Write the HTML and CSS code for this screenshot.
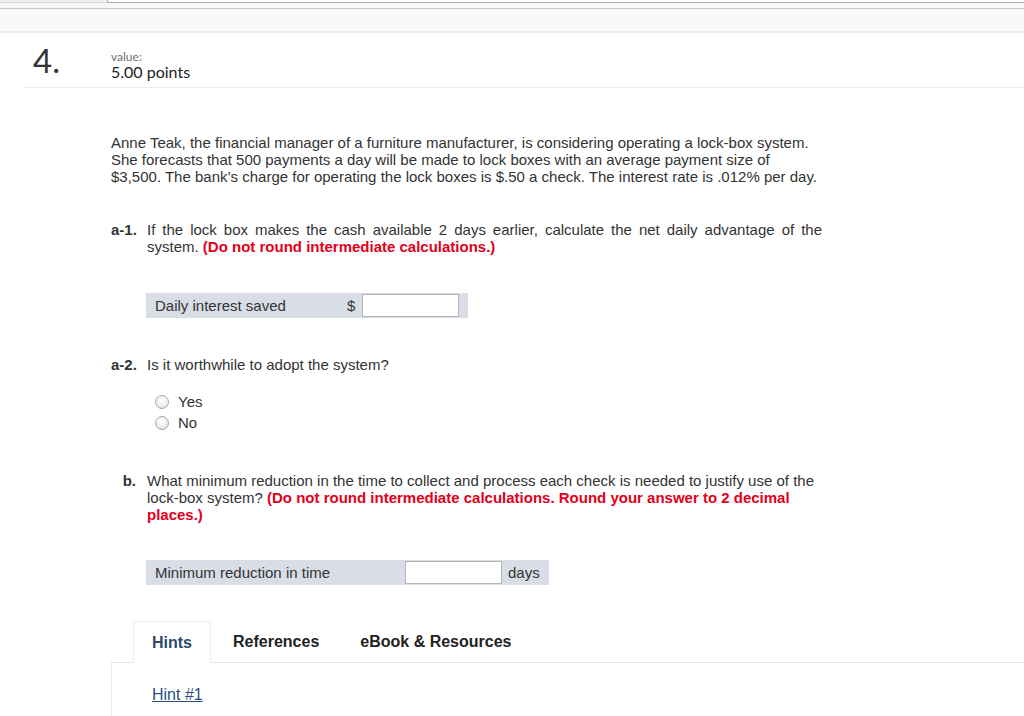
FILE: index.html
```html
<!DOCTYPE html>
<html>
<head>
<meta charset="utf-8">
<link rel="stylesheet" href="styles.css">
</head>
<body>
<div class="chrome">
  <div class="chrome-top"><div class="chrome-left"></div><div class="chrome-field"></div></div>
  <div class="chrome-gap"></div>
  <div class="chrome-band"></div>
</div>

<div class="qhead">
  <div class="qnum">4.</div>
  <div class="qval">
    <div class="vlabel">value:</div>
    <div class="vpoints">5.00 points</div>
  </div>
</div>

<div class="qbody">
  <p class="intro">Anne Teak, the financial manager of a furniture manufacturer, is considering operating a lock-box system. She forecasts that 500 payments a day will be made to lock boxes with an average payment size of $3,500. The bank’s charge for operating the lock boxes is $.50 a check. The interest rate is .012% per day.</p>

  <div class="part part-a1">
    <div class="plabel">a-1.</div>
    <div class="ptext justify">If the lock box makes the cash available 2 days earlier, calculate the net daily advantage of the system. <span class="red">(Do not round intermediate calculations.)</span></div>
  </div>

  <div class="answer answer-1">
    <span class="alabel w1">Daily interest saved</span>
    <span class="dollar">$</span>
    <span class="field"></span>
  </div>

  <div class="part part-a2">
    <div class="plabel">a-2.</div>
    <div class="ptext">Is it worthwhile to adopt the system?</div>
  </div>

  <div class="radios">
    <div class="radio"><span class="circle"></span><span class="rlabel">Yes</span></div>
    <div class="radio"><span class="circle"></span><span class="rlabel">No</span></div>
  </div>

  <div class="part part-b">
    <div class="plabel">b.</div>
    <div class="ptext">What minimum reduction in the time to collect and process each check is needed to justify use of the lock-box system? <span class="red">(Do not round intermediate calculations. Round your answer to 2 decimal places.)</span></div>
  </div>

  <div class="answer answer-2">
    <span class="alabel w2">Minimum reduction in time</span>
    <span class="field"></span>
    <span class="unit">days</span>
  </div>
</div>

<div class="tabs">
  <div class="tab active">Hints</div>
  <div class="tab">References</div>
  <div class="tab">eBook &amp; Resources</div>
</div>
<div class="tabpanel">
  <a class="hint" href="#">Hint #1</a>
</div>
</body>
</html>
```

FILE: styles.css
```css
html, body {
  margin: 0;
  padding: 0;
  background: #ffffff;
}
body {
  width: 1024px;
  height: 716px;
  overflow: hidden;
  font-family: "Liberation Sans", Arial, sans-serif;
  color: #333333;
}

/* browser chrome strip */
.chrome-top {
  display: flex;
  height: 3px;
  background: #f1f1f1;
}
.chrome-left {
  width: 107px;
  border-bottom: 1px solid #d6d6d6;
  box-sizing: border-box;
}
.chrome-field {
  flex: 1;
  background: #ffffff;
  border-left: 1px solid #b8b8b8;
  border-bottom: 1px solid #a9a9a9;
  box-sizing: border-box;
}
.chrome-gap {
  height: 5px;
  background: #f7f7f7;
}
.chrome-band {
  height: 22px;
  background: #f9f9f9;
  border-top: 1px solid #c4c4c4;
  border-bottom: 2px solid #ececec;
}

/* question header */
.qhead {
  display: flex;
  align-items: flex-start;
  margin-left: 25px;
  padding-left: 8px;
  height: 54px;
  border-bottom: 1px solid #ececec;
  font-family: Lato, "Open Sans", sans-serif;
}
.qnum {
  width: 78px;
  font-size: 33px;
  line-height: 34px;
  margin-top: 10px;
  color: #333333;
}
.qval {
  margin-top: 17px;
}
.vlabel {
  font-size: 12px;
  line-height: 13px;
  color: #707070;
}
.vpoints {
  font-size: 16px;
  line-height: 18px;
  color: #222222;
}

/* body */
.qbody {
  margin-left: 111px;
  width: 711px;
  font-size: 15px;
  line-height: 17px;
}
.intro {
  margin: 46px 0 0 0;
  width: 709px;
}
.part {
  display: flex;
}
.part-a1 { margin-top: 36px; }
.part-a2 { margin-top: 38px; }
.part-b { margin-top: 39px; }
.plabel {
  width: 29px;
  flex: none;
  padding-right: 7px;
  font-weight: bold;
  text-align: left;
  color: #333333;
}
.part-b .plabel {
  width: 25px;
  padding-right: 11px;
  text-align: right;
}
.ptext {
  flex: 1;
}
.justify { text-align: justify; }
.red {
  color: #e2001a;
  font-weight: bold;
}

.answer {
  display: inline-flex;
  align-items: center;
  height: 25px;
  margin-left: 35px;
  padding: 0 9px;
  background: #d9dde6;
  color: #333333;
}
.answer-1 { margin-top: 38px; }
.answer-2 { margin-top: 37px; }
.alabel { display: inline-block; }
.w1 { width: 192px; }
.w2 { width: 250px; }
.dollar {
  width: 15px;
}
.field {
  display: inline-block;
  box-sizing: border-box;
  width: 97px;
  height: 23px;
  background: #ffffff;
  border: 1px solid #b4b4b4;
}
.unit {
  margin-left: 6px;
}

.radios {
  margin-top: 18px;
  margin-left: 44px;
}
.radio {
  display: flex;
  align-items: center;
  height: 21px;
}
.circle {
  display: inline-block;
  box-sizing: border-box;
  width: 14px;
  height: 14px;
  border-radius: 50%;
  border: 1px solid #a8a8a8;
  background: radial-gradient(circle at 50% 35%, #ffffff 0%, #eeeeee 55%, #d4d4d4 100%);
}
.rlabel {
  margin-left: 9px;
}

/* tabs */
.tabs {
  display: flex;
  margin-top: 36px;
  margin-left: 111px;
  padding-left: 22px;
  height: 41px;
  border-bottom: 1px solid #e6e6e6;
  font-family: "Liberation Sans", Arial, sans-serif;
  font-weight: bold;
  font-size: 16px;
  color: #222222;
}
.tab {
  display: flex;
  align-items: center;
  padding: 0 19px;
  margin-right: 3px;
  height: 41px;
  box-sizing: border-box;
}
.tab.active {
  color: #2d4a6e;
  background: #ffffff;
  border: 1px solid #ececec;
  border-bottom: none;
  padding: 0 18px;
  height: 42px;
  margin-bottom: -1px;
}
.tabpanel {
  margin-left: 111px;
  border-left: 1px solid #ececec;
  padding: 23px 0 0 40px;
  height: 60px;
}
.hint {
  font-family: "Liberation Sans", Arial, sans-serif;
  font-size: 16px;
  color: #2a4e84;
  text-decoration: underline;
}
```
